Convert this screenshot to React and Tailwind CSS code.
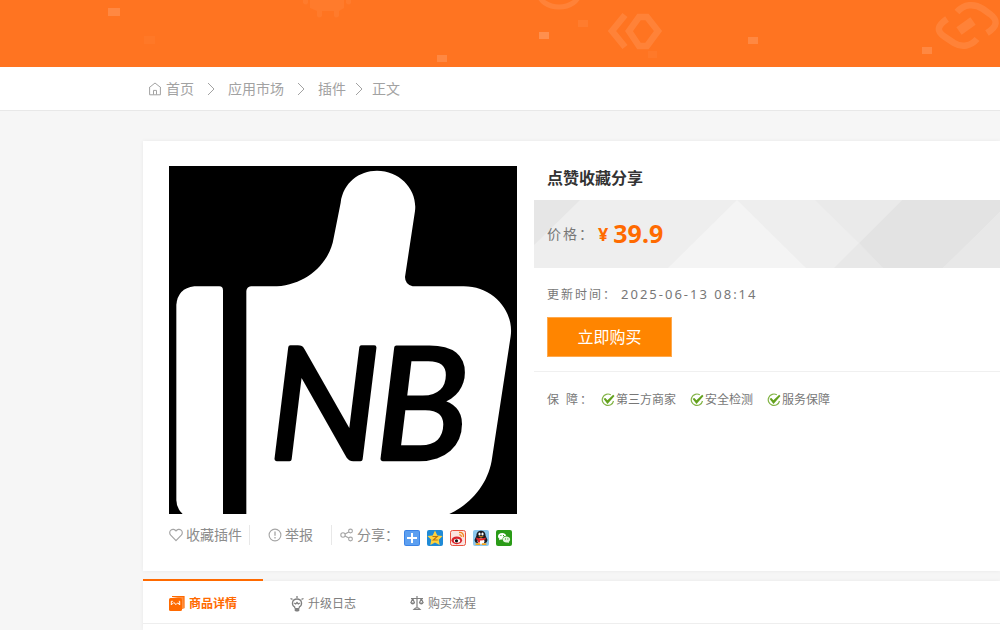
import React, { useState } from 'react';

const fontStack = "font-['Noto_Sans','Noto_Sans_CJK_SC',sans-serif]";

const crumbs = [
  { label: '首页', sep: 'mx-[13px]', home: true },
  { label: '应用市场', sep: 'mx-[13px]' },
  { label: '插件', sep: 'mx-[9px]' },
  { label: '正文' }
];

const promises = ['第三方商家', '安全检测', '服务保障'];

const HomeIcon = () => (
  <svg className="w-[14px] h-[14px] mr-1" viewBox="0 0 14 14" fill="none" stroke="currentColor" aria-hidden="true">
    <path d="M1 5.8 7 1l6 4.8M1.6 5.6v7.2h10.8V5.6M5.5 12.6V8.4h3v4.2" />
  </svg>
);

const Chevron = () => (
  <svg className="w-2 h-[14px]" viewBox="0 0 8 14" fill="none" stroke="currentColor" aria-hidden="true">
    <path d="M1 1l6 6-6 6" />
  </svg>
);

const HeartIcon = () => (
  <svg className="w-[14px] h-[14px]" viewBox="0 0 14 14" fill="none" stroke="#a5a5a5" strokeWidth="1.2" aria-hidden="true">
    <path d="M7 12.7 1.7 7.2C.3 5.6.4 3.3 1.9 2.1 3.5.8 5.7 1.2 7 3c1.3-1.8 3.5-2.2 5.1-.9 1.5 1.2 1.6 3.5.2 5.1z" strokeLinejoin="round" />
  </svg>
);

const ReportIcon = () => (
  <svg className="w-[14px] h-[14px]" viewBox="0 0 14 14" fill="none" stroke="#a5a5a5" strokeWidth="1.1" aria-hidden="true">
    <circle cx="7" cy="7" r="5.9" />
    <path d="M7 3.5v4.3M7 9v1.4" strokeWidth="1.3" />
  </svg>
);

const ShareIcon = () => (
  <svg className="w-[14px] h-[14px]" viewBox="0 0 14 14" fill="none" stroke="#a5a5a5" strokeWidth="1.1" aria-hidden="true">
    <circle cx="3" cy="7" r="2.2" />
    <circle cx="10.5" cy="3" r="1.9" />
    <circle cx="10.5" cy="11" r="1.9" />
    <path d="M5 6l3.8-2.1M5 8l3.8 2.1" />
  </svg>
);

const CheckIcon = () => (
  <svg className="w-[14px] h-[14px]" viewBox="0 0 14 14" fill="none" aria-hidden="true">
    <path d="M9.8 1.8A5.7 5.7 0 1 0 12.5 8" stroke="#83b446" strokeWidth="1.2" />
    <path d="M2.5 5.8l1.9-.9 2 2.3 5.8-5.4 1.3 1.1-7 8z" fill="#63a11d" />
  </svg>
);

const BannerArt = () => (
  <svg className="absolute left-0 top-0 w-[1000px] h-[67px]" viewBox="0 0 1000 67" fill="none" aria-hidden="true">
    <g fill="#fff">
      <path opacity=".15" d="M108 8h12v8h-12z" />
      <path opacity=".03" d="M144 36h11v8h-11z" />
      <path opacity=".15" d="M437 55h10v7h-10z" />
      <path opacity=".2" d="M539 32h10v7h-10z" />
      <path opacity=".06" d="M578 20h10v7h-10z" />
      <path opacity=".04" d="M648 51h9v7h-9z" />
      <path opacity=".15" d="M748 37h10v7h-10z" />
      <path opacity=".15" d="M922 47h10v7h-10z" />
      <path opacity=".05" d="M303 0h5v3q-2 3-5 0zM346 0h5v3q-2 3-5 0zM310 0h34v8l-5 3v5q-3 3-5 0v-5h-12v5q-3 3-5 0v-5l-7-3z" />
    </g>
    <g stroke="#fff" opacity=".1">
      <ellipse cx="559" cy="-7" rx="20" ry="14" strokeWidth="5" />
      <path d="M625 15 612 31l13 16M639 17h8l11 14-11 15h-8l-10-15z" strokeWidth="6.5" />
      <path d="M957 12c7-8 17-9 26-3l7 5c8 6 8 12-3 19M947 19c-10 7-11 12-2 18l9 6c8 5 17 3 23-4" strokeWidth="6.5" />
      <path d="M959 31l14-10" strokeWidth="9" />
    </g>
  </svg>
);

const Cover = () => (
  <svg className="block w-[348px] h-[348px]" viewBox="27 19 1044 1044" role="img" aria-label="NB">
    <path fill="#000" d="M27 19h1044v1044H27z" />
    <g fill="#fff">
      <path d="M103 380h75q11 0 11 12v671H68q-19-17-19-42V436q4-50 54-56z" />
      <path d="M273 380h78c90-6 158-70 170-145l21-106c8-60 55-96 109-96 70 0 122 58 114 121l-30 198q0 22 23 28h153c88 0 152 74 141 150l-57 373c-13 72-62 129-127 160H259V394q1-12 14-14z" />
    </g>
    <text y="898" fill="#000" stroke="#000" strokeWidth="13" strokeLinejoin="round" className="font-['Lato'] text-[468px] italic">
      <tspan x="327">N</tspan>
      <tspan x="645">B</tspan>
    </text>
  </svg>
);

const PriceArt = () => (
  <svg className="absolute left-0 top-0 w-[466px] h-[68px]" viewBox="0 0 466 68" aria-hidden="true">
    <path fill="#e6e6e6" d="M0 0h46L0 45z" />
    <path fill="#f4f4f4" d="M134 68 203 0l69 68z" />
    <path fill="#eaeaea" d="M281 0h87l-43 43z" />
    <path fill="#e8e8e8" d="M300 68l25-25 24 25z" />
    <path fill="#e3e3e3" d="M368 0h98v12l-57 56h-60l-24-25z" />
    <path fill="#e8e8e8" d="M466 12v56h-57z" />
  </svg>
);

const ShareLinks = () => (
  <div className="flex gap-[7px] ml-[5px] mt-[5px]">
    <a href="#more" aria-label="更多">
      <svg className="w-4 h-4" viewBox="0 0 16 16">
        <rect width="16" height="16" rx="2" fill="#3b83e6" />
        <rect x="1" y="1" width="14" height="14" rx="1" fill="#5c9ff0" />
        <path d="M7 3h2v4h4v2H9v4H7V9H3V7h4z" fill="#fff" />
      </svg>
    </a>
    <a href="#qzone" aria-label="QQ空间">
      <svg className="w-4 h-4" viewBox="0 0 16 16">
        <rect width="16" height="16" rx="2" fill="#1f8ad6" />
        <path d="M8 .6l2.3 4.8 5.3.7-3.9 3.6 1 5.3L8 12.4 3.3 15l1-5.3L.4 6.1l5.3-.7z" fill="#ffd23c" />
        <path d="M5.5 6.5h4.7L6.3 10h4.5" stroke="#b9750f" strokeWidth="1.1" fill="none" />
      </svg>
    </a>
    <a href="#weibo" aria-label="新浪微博">
      <svg className="w-4 h-4" viewBox="0 0 16 16">
        <rect x=".5" y=".5" width="15" height="15" rx="2" fill="#fbe3df" stroke="#e8523f" />
        <ellipse cx="6.8" cy="10.3" rx="5.3" ry="3.9" fill="#d9232b" />
        <ellipse cx="7" cy="10.8" rx="3.2" ry="2" fill="#fff" />
        <circle cx="6.5" cy="10.8" r="1.6" fill="#111" />
        <path d="M9 2.5c3-.5 5 1.7 4.4 4.7M9.3 4.9c1.4-.2 2.2.7 2 2" stroke="#f28a1e" strokeWidth="1.3" fill="none" />
      </svg>
    </a>
    <a href="#qq" aria-label="QQ好友">
      <svg className="w-4 h-4" viewBox="0 0 16 16">
        <rect width="16" height="16" rx="2" fill="#8cc8ee" />
        <path d="M8 .8c3.2 0 4.6 2.2 4.6 4.9L14.5 10l-.8 2.200-1.7.8H4l-1.700-.8L1.500 10l1.900-4.300C3.400 3 4.800.8 8 .8z" fill="#1b1b22" />
        <ellipse cx="8" cy="11.3" rx="3.4" ry="3" fill="#fff" />
        <ellipse cx="6.5" cy="4" rx="1.1" ry="1.5" fill="#fff" />
        <ellipse cx="9.5" cy="4" rx="1.1" ry="1.5" fill="#fff" />
        <path d="M5 6.2h6L8 7.600z" fill="#f6a21a" />
        <path d="M3.5 7.5q4.5 2 9 0l.3 1.800q-3 1.400-5.800 1.200v2H5v-2.300l-1.800-.9z" fill="#e5252a" />
        <path d="M2.7 13.3h4.500v1.800H2.700zM8.800 13.300h4.500v1.800H8.800z" fill="#f6a21a" />
      </svg>
    </a>
    <a href="#wechat" aria-label="微信">
      <svg className="w-4 h-4" viewBox="0 0 16 16">
        <rect width="16" height="16" rx="2" fill="#2a9b17" />
        <path d="M6.2 3C3.6 3 2 4.6 2 6.3c0 1 .5 1.9 1.4 2.5L3 10.2l1.7-.8h1.8C6.3 7.3 8 5.7 10.2 5.700 9.800 4.100 8.200 3 6.200 3z" fill="#fff" />
        <path d="M10.5 6.500c-2.200 0-3.700 1.300-3.700 3s1.500 3 3.700 3l1-.1 1.500.7-.3-1.200c.9-.6 1.400-1.400 1.400-2.400 0-1.700-1.400-3-3.600-3z" fill="#e4f5df" />
        <path d="M4.400 5h1v1h-1zM7 5h1v1H7zM9 8.400h1v1H9zM11.300 8.400h1v1h-1z" fill="#2a9b17" />
      </svg>
    </a>
  </div>
);

const DetailIcon = () => (
  <svg className="w-4 h-4" viewBox="0 0 16 16" aria-hidden="true">
    <path d="M3 .5h12v11.8" stroke="currentColor" strokeWidth="1.2" fill="none" />
    <path d="M3 1h12l-.5 12h-2L12 2.5z" fill="currentColor" opacity=".75" />
    <rect y="2" width="13" height="13" rx="1.5" fill="currentColor" />
    <path d="M2.3 9V5.3h1.5M9.8 5.3h.9V9L8.8 6.8 7 8.6 4.8 6.5 2.5 8.8" stroke="#fff" fill="none" />
  </svg>
);

const LogIcon = () => (
  <svg className="w-[14px] h-4" viewBox="0 0 14 16" fill="none" stroke="currentColor" strokeWidth="1.3" aria-hidden="true">
    <path d="M7 0v2M.5 2.5l2 .9M13.5 2.5l-2 .9M4.7 12.2V11C1 8.5 2 3 7 3s6 5.5 2.3 8v1.2" />
    <path d="M4.2 7l1.5 1L7 6.5 8.3 8l1.500-1" />
    <path d="M4.7 12h4.6v2.3L8.3 15.5H5.7l-1-1.2z" fill="currentColor" stroke="none" />
  </svg>
);

const FlowIcon = () => (
  <svg className="w-[14px] h-4" viewBox="0 0 14 16" fill="none" stroke="currentColor" strokeWidth="1.2" aria-hidden="true">
    <path d="M7 0v12M1 2.500h12M2.700 2.500.8 7M2.700 2.500 4.600 7M11.300 2.500 9.400 7M11.300 2.500l1.900 4.500M4 13.500l1.500-1.500h3l1.500 1.500z" />
    <path d="M.3 6.500h4.800q-.6 2-2.400 2T.3 6.500zM8.900 6.500h4.800q-.6 2-2.400 2t-2.400-2z" fill="currentColor" stroke="none" />
  </svg>
);

const tabs = [
  { id: 'detail', label: '商品详情', icon: <DetailIcon /> },
  { id: 'log', label: '升级日志', icon: <LogIcon /> },
  { id: 'flow', label: '购买流程', icon: <FlowIcon /> }
];

const App = () => {
  const [active, setActive] = useState('detail');

  return (
    <div className={`min-h-screen overflow-hidden bg-[#f6f6f6] text-[#777] ${fontStack}`}>
      <header className="relative h-[67px] overflow-hidden bg-[#ff7421]">
        <BannerArt />
      </header>

      <nav className="h-11 bg-white border-b border-[#e8e8e8] pl-[148px] flex items-center text-sm text-[#a2a2a2]">
        {crumbs.map((c) => (
          <React.Fragment key={c.label}>
            <a href="#crumb" className="flex items-center">
              {c.home && <HomeIcon />}
              {c.label}
            </a>
            {c.sep && (
              <span className={c.sep}>
                <Chevron />
              </span>
            )}
          </React.Fragment>
        ))}
      </nav>

      <main className="pl-[143px] pt-[30px]">
        <section className="bg-white shadow-[0_0_4px_rgba(0,0,0,0.06)] pl-[26px] pt-[25px] pb-[26px] flex">
          <div className="w-[348px] shrink-0">
            <Cover />
            <div className="flex items-center mt-[11px] h-5 text-sm text-[#8c8c8c] whitespace-nowrap">
              <button type="button" className="shrink-0 flex items-center gap-[3px] h-5 pr-[7px] border-r border-[#e8e8e8]">
                <HeartIcon />
                收藏插件
              </button>
              <button type="button" className="shrink-0 flex items-center gap-[3px] h-5 px-[18px] border-r border-[#e8e8e8]">
                <ReportIcon />
                举报
              </button>
              <span className="shrink-0 flex items-center gap-[3px] pl-2">
                <ShareIcon />
                分享：
              </span>
              <ShareLinks />
            </div>
          </div>

          <div className="flex-1 min-w-0 ml-[17px]">
            <h1 className="pl-[13px] text-base leading-6 font-bold text-[#333]">点赞收藏分享</h1>
            <div className="relative overflow-hidden mt-[10px] h-[68px] bg-[#eee]">
              <PriceArt />
              <div className="relative h-full flex items-center pl-[13px]">
                <span className="text-sm tracking-[2px]">价格：</span>
                <span className="ml-[3px] text-lg font-bold text-[#ff6a00]">¥</span>
                <span className="ml-[5px] text-[25px] font-bold text-[#ff6a00]">39.9</span>
              </div>
            </div>
            <p className="pl-[13px] mt-4 text-xs leading-5 tracking-[2px]">
              更新时间：<span className="ml-1 text-[13px]">2025-06-13 08:14</span>
            </p>
            <button type="button" className="ml-[13px] mt-3 w-[125px] h-10 bg-[#ff8500] border border-[#ffa94d] text-base text-white">
              立即购买
            </button>
            <div className="mt-[14px] border-t border-[#f0f0f0] pl-[13px] pt-[18px] flex items-center text-xs leading-5">
              <span className="w-[54px] tracking-[2px] whitespace-nowrap">保 障：</span>
              <ul className="flex gap-[14px]">
                {promises.map((p) => (
                  <li key={p} className="flex items-center gap-px">
                    <CheckIcon />
                    {p}
                  </li>
                ))}
              </ul>
            </div>
          </div>
        </section>

        <section className="mt-[10px] bg-white shadow-[0_0_4px_rgba(0,0,0,0.06)] pb-1.5">
          <div role="tablist" className="flex border-b border-[#eee]">
            {tabs.map((t) => (
              <button
                key={t.id}
                type="button"
                role="tab"
                aria-selected={active === t.id}
                onClick={() => setActive(t.id)}
                className={`-mt-[2px] w-[120px] h-11 pt-[3px] border-t-2 flex items-center justify-center gap-1 text-xs ${
                  active === t.id ? 'border-[#ff6a00] text-[#ff6a00] font-bold' : 'border-transparent text-[#808080]'
                }`}
              >
                {t.icon}
                {t.label}
              </button>
            ))}
          </div>
        </section>
      </main>
    </div>
  );
};

export default App;
